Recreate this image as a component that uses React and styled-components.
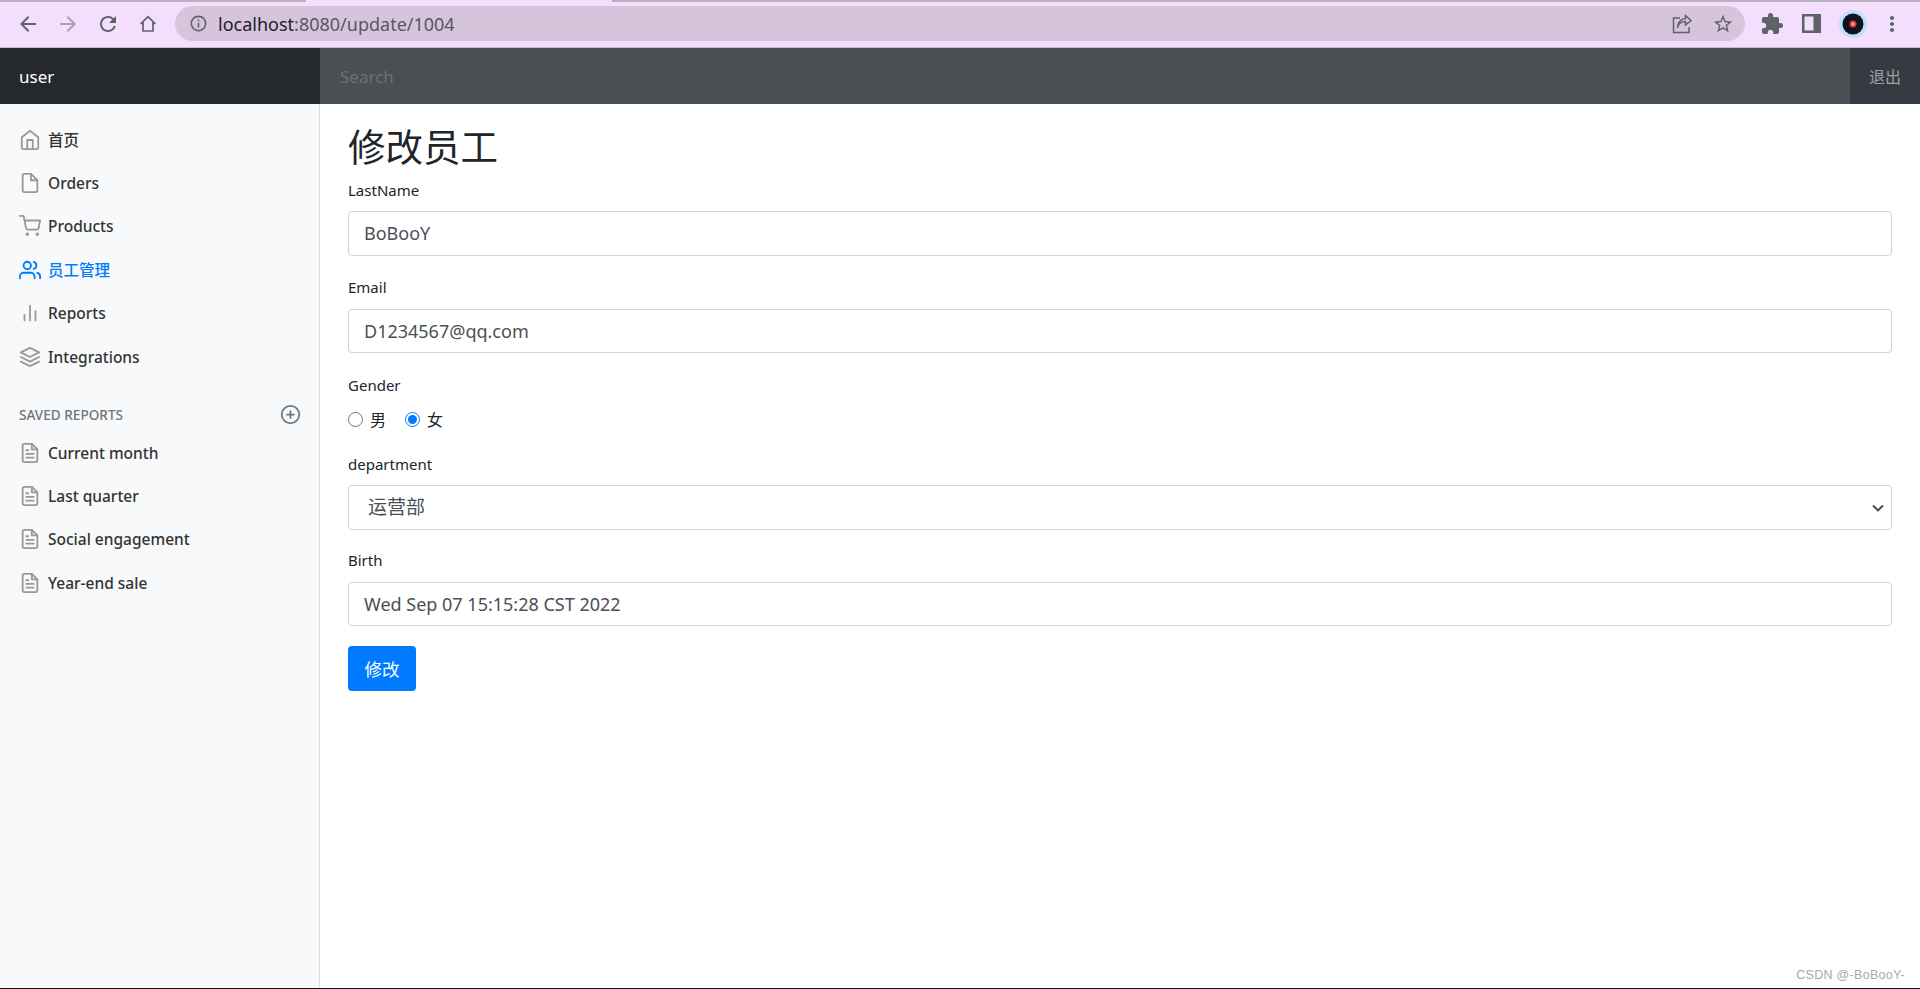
import React from "react";
import styled, { createGlobalStyle } from "styled-components";
import { FiHome, FiFile, FiShoppingCart, FiUsers, FiBarChart2, FiLayers, FiPlusCircle, FiFileText } from "react-icons/fi";
import { MdExtension, MdMoreVert, MdStarBorder, MdArrowBack, MdArrowForward, MdRefresh, MdInfoOutline } from "react-icons/md";

const FONT = `"Noto Sans", "Noto Sans CJK SC", sans-serif`;

const GlobalStyle = createGlobalStyle`
  html, body { margin: 0; padding: 0; height: 100%; background: #fff; }
  body { font-family: ${FONT}; color: #212529; overflow: hidden; }
  * { box-sizing: border-box; }
`;

const Page = styled.div`
  position: relative;
  display: flex;
  flex-direction: column;
  height: 989px;
  border-bottom: 1px solid #111;
`;

/* browser chrome */
const BrowserBar = styled.div`
  flex: 0 0 48px;
  display: flex;
  align-items: center;
  background: #f3dffd;
  border-bottom: 1px solid #c9bccf;
  position: relative;
`;
const TabEdge = styled.div`
  position: absolute;
  top: 0;
  height: 2px;
  background: #b9b2bd;
  left: ${(p) => p.$left}px;
  width: ${(p) => p.$width}px;
`;
const NavButton = styled.div`
  display: flex;
  align-items: center;
  justify-content: center;
  width: 40px;
  height: 30px;
  font-size: 24px;
  color: ${(p) => (p.$dim ? "#a9a0ae" : "#5f6368")};
`;
const NavButtons = styled.div`
  display: flex;
  padding-left: 8px;
  width: 175px;
`;
const Omnibox = styled.div`
  width: 1570px;
  height: 35px;
  border-radius: 18px;
  background: #d6c4dd;
  display: flex;
  align-items: center;
  padding: 0 11px 0 14px;
  font-size: 18px;
  color: #5b5560;
`;
const InfoIcon = styled.span`
  display: flex;
  font-size: 19px;
  color: #5f6368;
  margin-right: 10px;
`;
const Host = styled.span`
  color: #202124;
`;
const OmniRight = styled.div`
  margin-left: auto;
  display: flex;
  align-items: center;
  gap: 20px;
  color: #5f6368;
  font-size: 22px;
`;
const IconRow = styled.div`
  display: flex;
  align-items: center;
  margin-left: 15px;
  color: #5f6368;
  font-size: 24px;
  gap: 18px;
`;
const Glyph = styled.span`
  display: flex;
`;
const MoreGlyph = styled(Glyph)`
  margin-left: -5px;
`;

/* dark top nav */
const TopNav = styled.div`
  flex: 0 0 56px;
  display: flex;
`;
const Brand = styled.div`
  width: 320px;
  background: #25282c;
  color: #fff;
  font-size: 17px;
  display: flex;
  align-items: center;
  padding-left: 19px;
`;
const Search = styled.input`
  flex: 1;
  border: 0;
  outline: 0;
  background: #4a4f53;
  color: #fff;
  font: 17px ${FONT};
  padding: 0 20px;
  &::placeholder { color: #6a6f73; opacity: 1; }
`;
const SignOut = styled.div`
  width: 70px;
  background: #343a40;
  color: #9aa0a5;
  font-size: 16px;
  display: flex;
  align-items: center;
  justify-content: center;
`;

const Body = styled.div`
  flex: 1;
  display: flex;
  min-height: 0;
`;

/* sidebar */
const Sidebar = styled.nav`
  width: 320px;
  background: #f8f9fa;
  border-right: 1px solid #dcdfe2;
  padding-top: 14px;
`;
const Item = styled.div`
  height: 43.4px;
  display: flex;
  align-items: center;
  padding-left: 19px;
  gap: 7px;
  font-size: 15.5px;
  font-weight: 500;
  color: ${(p) => (p.$active ? "#007bff" : "#333")};
  svg {
    flex: 0 0 22px;
    color: ${(p) => (p.$active ? "#007bff" : "#999")};
  }
`;
const SectionHead = styled.div`
  margin: 23.5px 0 3px;
  height: 26px;
  display: flex;
  align-items: center;
  justify-content: space-between;
  padding: 0 18px 0 19px;
  font-size: 13.6px;
  font-weight: 500;
  color: #6c757d;
  text-transform: uppercase;
  svg { color: #6c757d; }
`;

/* form */
const Main = styled.main`
  flex: 1;
  padding: 20.5px 28px 0;
`;
const Heading = styled.h2`
  margin: 0 0 11px;
  font-size: 37.5px;
  font-weight: 400;
  line-height: 44px;
`;
const Group = styled.div`
  margin-bottom: ${(p) => p.$gap ?? 21.5}px;
`;
const Label = styled.label`
  display: block;
  font-size: 15px;
  line-height: 21px;
  margin-bottom: 10.5px;
`;
const Input = styled.input`
  display: block;
  width: 100%;
  height: 44.6px;
  padding: 0 15px;
  border: 1px solid #ced4da;
  border-radius: 4px;
  background: #fff;
  color: #495057;
  font: 18px ${FONT};
  outline: 0;
`;
const SelectWrap = styled.div`
  position: relative;
`;
const Select = styled.select`
  display: block;
  width: 100%;
  height: 44.6px;
  padding: 0 15px 0 19px;
  border: 1px solid #ced4da;
  border-radius: 4px;
  background: #fff;
  color: #495057;
  font: 19px ${FONT};
  appearance: none;
  outline: 0;
`;
const Caret = styled.svg`
  position: absolute;
  right: 6px;
  top: 17px;
  pointer-events: none;
`;
const RadioRow = styled.div`
  display: flex;
  align-items: center;
  height: 26px;
`;
const RadioLabel = styled.label`
  display: flex;
  align-items: center;
  font-size: 16px;
  margin-right: 19px;
`;
const Radio = styled.input`
  width: 15px;
  height: 15px;
  margin: 0 7px 0 0;
  accent-color: #007bff;
`;
const Submit = styled.button`
  display: block;
  width: 68px;
  height: 45px;
  margin-top: -2px;
  border: 0;
  border-radius: 4px;
  background: #007bff;
  color: #fff;
  font: 17.6px ${FONT};
`;
const Watermark = styled.div`
  position: absolute;
  right: 15px;
  bottom: 6px;
  font: 12.5px "Liberation Sans", sans-serif;
  color: #a8a8a8;
  letter-spacing: 0.3px;
`;

const mainItems = [
  { icon: FiHome, label: "首页" },
  { icon: FiFile, label: "Orders" },
  { icon: FiShoppingCart, label: "Products" },
  { icon: FiUsers, label: "员工管理", active: true },
  { icon: FiBarChart2, label: "Reports" },
  { icon: FiLayers, label: "Integrations" },
];
const reports = ["Current month", "Last quarter", "Social engagement", "Year-end sale"];

export default function App() {
  return (
    <Page>
      <GlobalStyle />
      <BrowserBar>
        <TabEdge $left={0} $width={306} />
        <TabEdge $left={612} $width={1308} />
        <NavButtons>
          <NavButton><MdArrowBack /></NavButton>
          <NavButton $dim><MdArrowForward /></NavButton>
          <NavButton><MdRefresh /></NavButton>
          <NavButton>
            <svg width="20" height="20" viewBox="0 0 20 20" fill="none" stroke="#5f6368" strokeWidth="1.7">
              <path d="M2.5 10 10 2.8 17.5 10M5 8v9h10V8" />
            </svg>
          </NavButton>
        </NavButtons>
        <Omnibox>
          <InfoIcon><MdInfoOutline /></InfoIcon>
          <span><Host>localhost</Host>:8080/update/1004</span>
          <OmniRight>
            <svg width="20" height="20" viewBox="0 0 20 20" fill="none" stroke="#5f6368" strokeWidth="1.5">
              <path d="M8 4H1.5v14.5H17V13" />
              <path d="M5.5 14c.6-4 4-6.6 8-6.6V11L19 6.5 13.5 1.5v3c-5 .5-8 4.5-8 9.5z" />
            </svg>
            <Glyph><MdStarBorder /></Glyph>
          </OmniRight>
        </Omnibox>
        <IconRow>
          <Glyph><MdExtension /></Glyph>
          <svg width="19" height="19" viewBox="0 0 19 19">
            <path d="M0 0h19v19H0z" fill="#5f6368" />
            <path d="M2.5 2.5h9v14h-9z" fill="#f3dffd" />
          </svg>
          <svg width="28" height="28" viewBox="0 0 28 28">
            <circle cx="14" cy="14" r="14" fill="#bfe0fb" />
            <circle cx="14" cy="14" r="10.5" fill="#10121f" />
            <circle cx="14" cy="14" r="3.5" fill="#e8344e" />
            <circle cx="14" cy="14" r="1.5" fill="#f6c445" />
          </svg>
          <MoreGlyph><MdMoreVert /></MoreGlyph>
        </IconRow>
      </BrowserBar>

      <TopNav>
        <Brand>user</Brand>
        <Search placeholder="Search" />
        <SignOut>退出</SignOut>
      </TopNav>

      <Body>
        <Sidebar>
          {mainItems.map(({ icon: Icon, label, active }) => (
            <Item key={label} $active={active}>
              <Icon size={22} />
              {label}
            </Item>
          ))}
          <SectionHead>
            Saved reports
            <FiPlusCircle size={21} />
          </SectionHead>
          {reports.map((r) => (
            <Item key={r}>
              <FiFileText size={22} />
              {r}
            </Item>
          ))}
        </Sidebar>

        <Main>
          <Heading>修改员工</Heading>
          <Group>
            <Label>LastName</Label>
            <Input readOnly value="BoBooY" />
          </Group>
          <Group>
            <Label>Email</Label>
            <Input readOnly value="D1234567@qq.com" />
          </Group>
          <Group>
            <Label>Gender</Label>
            <RadioRow>
              <RadioLabel><Radio type="radio" name="gender" readOnly />男</RadioLabel>
              <RadioLabel><Radio type="radio" name="gender" readOnly checked />女</RadioLabel>
            </RadioRow>
          </Group>
          <Group $gap={20.5}>
            <Label>department</Label>
            <SelectWrap>
              <Select defaultValue="运营部">
                <option>运营部</option>
              </Select>
              <Caret width="16" height="12" viewBox="0 0 16 12" fill="none" stroke="#3f464d" strokeWidth="1.9">
                <path d="M3 3.5 8 8.5 13 3.5" />
              </Caret>
            </SelectWrap>
          </Group>
          <Group>
            <Label>Birth</Label>
            <Input readOnly value="Wed Sep 07 15:15:28 CST 2022" />
          </Group>
          <Submit>修改</Submit>
        </Main>
      </Body>
      <Watermark>CSDN @-BoBooY-</Watermark>
    </Page>
  );
}
